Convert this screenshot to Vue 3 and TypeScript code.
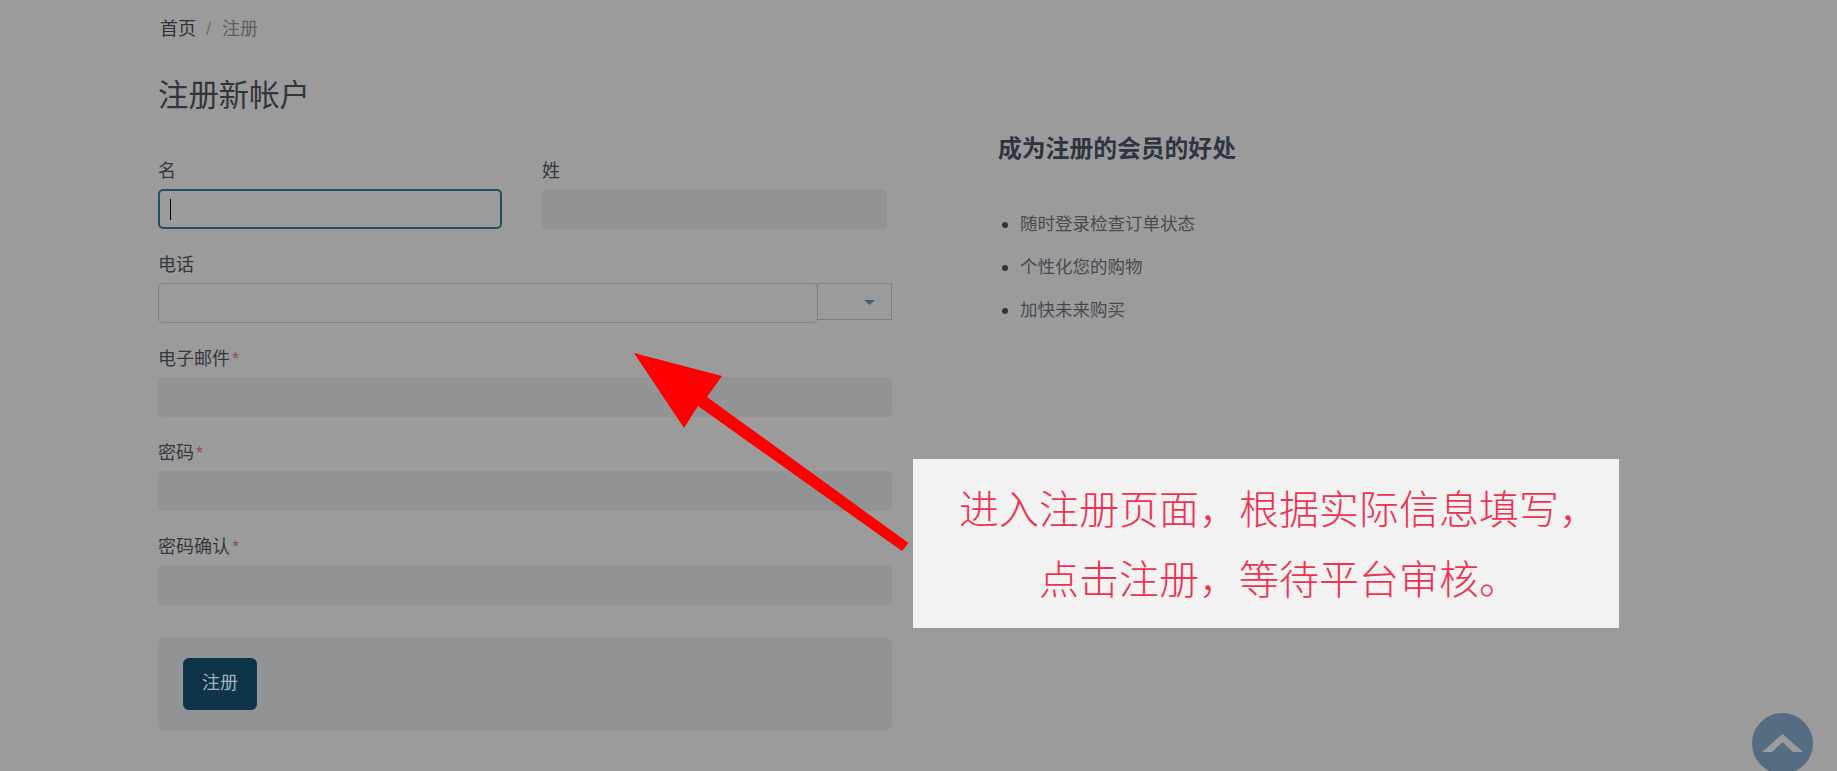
<script setup lang="ts">
interface Field { label: string; required: boolean }
const fields: Field[] = [
  { label: '电子邮件', required: true },
  { label: '密码', required: true },
  { label: '密码确认', required: true },
]
const benefits: string[] = ['随时登录检查订单状态', '个性化您的购物', '加快未来购买']
</script>

<template>
  <div class="page">
    <nav class="crumbs">
      <span class="crumb-home">首页</span>
      <span class="crumb-sep">/</span>
      <span class="crumb-current">注册</span>
    </nav>
    <h1 class="title">注册新帐户</h1>
    <div class="columns">
      <form class="form" @submit.prevent>
        <div class="name-row">
          <div class="field">
            <label class="label">名</label>
            <div class="input input-focus"><span class="caret"></span></div>
          </div>
          <div class="field">
            <label class="label">姓</label>
            <div class="input"></div>
          </div>
        </div>
        <div class="field">
          <label class="label">电话</label>
          <div class="phone-row">
            <div class="input input-phone"></div>
            <div class="country">
              <svg class="country-caret" width="11" height="5" viewBox="0 0 11 5"><path d="M0 0h11L5.500 5z" /></svg>
            </div>
          </div>
        </div>
        <div v-for="f in fields" :key="f.label" class="field">
          <label class="label">{{ f.label }}<span v-if="f.required" class="req">*</span></label>
          <div class="input"></div>
        </div>
        <div class="actions">
          <button class="submit" type="submit">注册</button>
        </div>
      </form>
      <aside class="benefits">
        <h2 class="benefits-title">成为注册的会员的好处</h2>
        <ul class="benefits-list">
          <li v-for="b in benefits" :key="b">{{ b }}</li>
        </ul>
      </aside>
    </div>

    <svg class="arrow" width="300" height="220" viewBox="0 0 300 220">
      <polygon points="4,3 92,26 77,47 278.500,193 272,201 68,56 54,78" />
    </svg>

    <div class="note">
      <p>进入注册页面，根据实际信息填写，</p>
      <p>点击注册，等待平台审核。</p>
    </div>

    <div class="to-top">
      <svg width="61" height="61" viewBox="0 0 61 61">
        <polygon points="10,39 30.500,21 51,39 41,39 30.500,29 20,39" />
      </svg>
    </div>
  </div>
</template>

<style>
html, body { margin: 0; background: #9b9b9b; }
</style>

<style scoped>
.page {
  position: relative;
  box-sizing: border-box;
  width: 1837px;
  height: 771px;
  overflow: hidden;
  padding: 16px 0 0 158px;
  background: #9b9b9b;
  color: #33383f;
  font-family: "Liberation Sans", "Noto Sans CJK SC", sans-serif;
  font-size: 18px;
  line-height: 27px;
}
.crumbs { display: flex; align-items: center; padding-left: 2px; height: 27px; }
.crumb-home { color: #2f3236; }
.crumb-sep { color: #6d7073; margin: 0 11px 0 10px; }
.crumb-current { color: #5c5f63; }
.title {
  margin: 34px 0 0;
  font-size: 30.400px;
  line-height: 36px;
  font-weight: 400;
  color: #31363e;
}
.columns { display: grid; grid-template-columns: 734px 1fr; column-gap: 106px; }
.form { padding-top: 44px; }
.name-row { display: grid; grid-template-columns: 344px 345px; column-gap: 40px; }
.field { height: 94px; }
.label { display: block; height: 27px; padding-top: 1px; margin-bottom: 4px; color: #33383f; }
.req { margin-left: 2px; color: #8a5350; }
.input {
  position: relative;
  box-sizing: border-box;
  height: 40px;
  border-radius: 5px;
  background: #929394;
}
.input-focus { background: transparent; border: 2px solid #234f66; }
.caret {
  position: absolute;
  left: 10px;
  top: 8px;
  width: 1px;
  height: 21px;
  background: #000;
}
.phone-row { display: flex; align-items: flex-start; }
.input-phone {
  width: 660px;
  background: transparent;
  border: 1px solid #77828c;
  position: relative;
  z-index: 1;
}
.country {
  box-sizing: border-box;
  display: flex;
  align-items: center;
  justify-content: flex-end;
  width: 75px;
  height: 37px;
  margin-left: -1px;
  padding: 1px 16px 0 0;
  border: 1px solid #77828c;
}
.country-caret { display: block; fill: #4a6173; }
.actions {
  box-sizing: border-box;
  height: 94px;
  margin-top: 10px;
  padding: 21px 25px;
  border-radius: 8px;
  background: #929394;
}
.submit {
  display: block;
  box-sizing: border-box;
  width: 74px;
  height: 52px;
  padding: 0 0 2px;
  border: 0;
  border-radius: 6px;
  background: #0d3449;
  color: #a3b2ba;
  font: inherit;
}
.benefits-title {
  margin: 18px 0 0;
  font-size: 23.800px;
  line-height: 36px;
  font-weight: 700;
  color: #2f3540;
}
.benefits-list {
  margin: 36px 0 0;
  padding: 0;
  list-style: none;
  color: #484c52;
  font-size: 17.500px;
}
.benefits-list li {
  position: relative;
  height: 43px;
  line-height: 43px;
  padding-left: 22px;
}
.benefits-list li::before {
  content: "";
  position: absolute;
  left: 4px;
  top: 19px;
  width: 6px;
  height: 6px;
  border-radius: 50%;
  background: #2f3540;
}
.arrow { position: absolute; left: 630px; top: 350px; }
.arrow polygon { fill: #fe0000; }
.note {
  position: absolute;
  left: 913px;
  top: 459px;
  box-sizing: border-box;
  width: 706px;
  height: 169px;
  padding: 13px 0 0 26px;
  background: #f3f2f3;
  color: #ee3350;
  font-family: "Noto Sans CJK SC", sans-serif;
  font-size: 40px;
  font-weight: 300;
  line-height: 70px;
  text-align: center;
}
.note p { margin: 0; }
.to-top {
  position: absolute;
  left: 1752px;
  top: 713px;
  width: 61px;
  height: 61px;
  border-radius: 50%;
  background: #556d82;
}
.to-top svg { display: block; fill: #9b9b9b; }
</style>
